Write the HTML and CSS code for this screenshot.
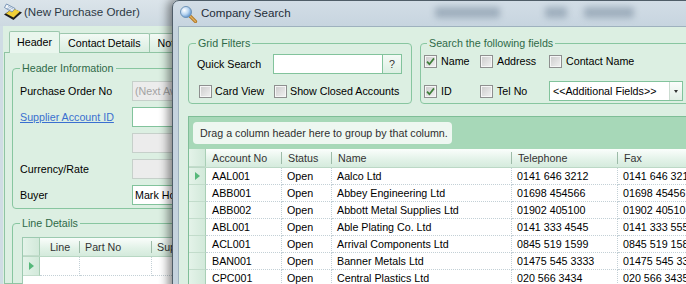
FILE: index.html
```html
<!DOCTYPE html>
<html>
<head>
<meta charset="utf-8">
<title>Company Search</title>
<link rel="stylesheet" href="styles.css">
</head>
<body>
<div class="win back">
  <div class="tbar btbar">
    <svg class="ico" width="20" height="20" viewBox="0 0 20 20">
      <path d="M1 12.5 L10.5 18 L19 10.5 L10 6.5 Z" fill="#1f1f1f"/>
      <path d="M3 11.5 L10.5 15.5 L17 9.5 L10 6.5 Z" fill="#f0cf38"/>
      <path d="M3.5 2 L12 6.5 L9 10 L1.5 5.5 Z" fill="#f4f7fb" stroke="#5d7fa6" stroke-width="0.8"/>
      <path d="M5 4.5 L10 7 M4 6 L8.5 8.3" stroke="#7d9cc0" stroke-width="0.7"/>
    </svg>
    <span class="ttl">(New Purchase Order)</span>
  </div>
  <div class="bclient">
    <div class="tabs">
      <span class="tab sel">Header</span><span class="tab">Contact Details</span><span class="tab">Notes</span>
    </div>
    <div class="tpage">
      <fieldset class="grp ghi">
        <legend>Header Information</legend>
        <div class="form">
          <span>Purchase Order No</span><span class="inp dis">(Next Available)</span>
          <a class="lnk">Supplier Account ID</a><span class="inp"></span>
          <span></span><span class="inp dis"></span>
          <span>Currency/Rate</span><span class="inp dis"></span>
          <span>Buyer</span><span class="inp">Mark Hodgson</span>
        </div>
      </fieldset>
      <fieldset class="grp gld">
        <legend>Line Details</legend>
        <div class="lgrid">
          <div class="lrow lhead"><span class="rsel"></span><span class="hc ctr">Line</span><span class="hc">Part No</span><span class="hc">Supplier</span></div>
          <div class="lrow ldata"><span class="rsel"><span class="tri"></span></span><span class="dc"></span><span class="dc"></span><span class="dc"></span></div>
        </div>
      </fieldset>
    </div>
  </div>
</div>

<div class="win front">
  <div class="tbar ftbar">
    <svg class="ico" width="20" height="20" viewBox="0 0 20 20">
      <defs>
        <radialGradient id="lens" cx="0.35" cy="0.35" r="0.75">
          <stop offset="0" stop-color="#ffffff"/>
          <stop offset="0.5" stop-color="#b9d6f2"/>
          <stop offset="1" stop-color="#4d86c4"/>
        </radialGradient>
      </defs>
      <line x1="12" y1="13" x2="17.5" y2="18.5" stroke="#b27a25" stroke-width="3.2" stroke-linecap="round"/>
      <line x1="12" y1="13" x2="17.5" y2="18.5" stroke="#e2b060" stroke-width="1.2" stroke-linecap="round"/>
      <circle cx="8" cy="9" r="5.5" fill="url(#lens)" stroke="#6f94b8" stroke-width="1"/>
    </svg>
    <span class="ttl">Company Search</span>
    <span class="blur bl1"></span><span class="blur bl2"></span><span class="blur bl3"></span>
  </div>
  <div class="fclient">
    <div class="filters">
      <fieldset class="grp gf">
        <legend>Grid Filters</legend>
        <div class="qs"><span class="qlbl">Quick Search</span><span class="inp qinp"></span><span class="qbtn">?</span></div>
        <div class="cbrow">
          <label class="chk"><span class="cb"></span>Card View</label>
          <label class="chk"><span class="cb"></span>Show Closed Accounts</label>
        </div>
      </fieldset>
      <fieldset class="grp gs">
        <legend>Search the following fields</legend>
        <div class="sgrid">
          <label class="chk"><span class="cb"><svg width="9" height="9" viewBox="0 0 9 9"><path d="M1 4.6 L3.4 7.2 L8 1.4" fill="none" stroke="#3f7f3a" stroke-width="1.7"/></svg></span>Name</label>
          <label class="chk"><span class="cb"></span>Address</label>
          <label class="chk"><span class="cb"></span>Contact Name</label>
          <label class="chk"><span class="cb"><svg width="9" height="9" viewBox="0 0 9 9"><path d="M1 4.6 L3.4 7.2 L8 1.4" fill="none" stroke="#3f7f3a" stroke-width="1.7"/></svg></span>ID</label>
          <label class="chk"><span class="cb"></span>Tel No</label>
          <div class="combo"><span class="ctext">&lt;&lt;Additional Fields&gt;&gt;</span><span class="cdrop"><span class="darr"></span></span></div>
        </div>
      </fieldset>
    </div>
    <div class="grid">
      <div class="band"><span class="drag">Drag a column header here to group by that column.</span></div>
      <div class="grow ghead"><span class="rsel"></span><span class="hc">Account No</span><span class="hc">Status</span><span class="hc">Name</span><span class="hc">Telephone</span><span class="hc">Fax</span></div>
      <div class="grow gdata"><span class="rsel"><span class="tri"></span></span><span class="dc">AAL001</span><span class="dc">Open</span><span class="dc">Aalco Ltd</span><span class="dc">0141 646 3212</span><span class="dc">0141 646 3213</span></div>
      <div class="grow gdata"><span class="rsel"></span><span class="dc">ABB001</span><span class="dc">Open</span><span class="dc">Abbey Engineering Ltd</span><span class="dc">01698 454566</span><span class="dc">01698 454567</span></div>
      <div class="grow gdata"><span class="rsel"></span><span class="dc">ABB002</span><span class="dc">Open</span><span class="dc">Abbott Metal Supplies Ltd</span><span class="dc">01902 405100</span><span class="dc">01902 405101</span></div>
      <div class="grow gdata"><span class="rsel"></span><span class="dc">ABL001</span><span class="dc">Open</span><span class="dc">Able Plating Co. Ltd</span><span class="dc">0141 333 4545</span><span class="dc">0141 333 5555</span></div>
      <div class="grow gdata"><span class="rsel"></span><span class="dc">ACL001</span><span class="dc">Open</span><span class="dc">Arrival Components Ltd</span><span class="dc">0845 519 1599</span><span class="dc">0845 519 1588</span></div>
      <div class="grow gdata"><span class="rsel"></span><span class="dc">BAN001</span><span class="dc">Open</span><span class="dc">Banner Metals Ltd</span><span class="dc">01475 545 3333</span><span class="dc">01475 545 3334</span></div>
      <div class="grow gdata"><span class="rsel"></span><span class="dc">CPC001</span><span class="dc">Open</span><span class="dc">Central Plastics Ltd</span><span class="dc">020 566 3434</span><span class="dc">020 566 3435</span></div>
    </div>
  </div>
</div>
</body>
</html>
```

FILE: styles.css
```css
* { box-sizing: border-box; }
html, body { margin: 0; padding: 0; }
body {
  width: 686px; height: 284px; overflow: hidden; position: relative;
  background: #7d8f9b;
  font-family: "Liberation Sans", Arial, sans-serif;
  font-size: 10.7px; color: #000;
}

.win { position: absolute; top: 0; overflow: hidden; }

/* title bars */
.tbar { display: flex; align-items: center; white-space: nowrap; }
.ico { flex: none; display: block; }
.ttl { font-size: 11.6px; color: #2c3944; }

/* ---------- back window ---------- */
.back {
  left: 0; width: 380px; height: 284px;
  background: #cfdce4; padding-left: 3px;
}
.btbar {
  height: 26px; padding-bottom: 3px; gap: 1px;
  background: linear-gradient(#dbe4ea, #cdd9e1);
  margin-left: -3px; padding-left: 3px;
}
.bclient { background: #dcefe2; height: 258px; }
.tabs { display: flex; align-items: flex-end; height: 26px; padding-left: 6px; }
.tab {
  height: 19px; line-height: 18px; padding: 0 8px;
  border: 1px solid #9cc7ad; border-bottom: none; border-radius: 2px 2px 0 0;
  background: linear-gradient(#f3faf5, #d9ede0);
  margin-left: -1px;
}
.tab.sel {
  height: 22px; line-height: 20px; padding: 0 7px; margin-left: 0;
  background: #e9f6ed; margin-bottom: -1px; position: relative; z-index: 1;
}
.tpage {
  margin-left: 1px; height: 232px;
  border: 1px solid #8fc4a3; border-right: none;
  padding: 9px 0 0 7px;
}

.grp {
  margin: 0; padding: 0; min-width: 0;
  border: 1px solid #88c6a0; border-radius: 4px;
}
.grp legend { padding: 0 2px; margin-left: 7px; line-height: 13px; color: #2f6a48; }

.ghi { width: 330px; }
.form {
  display: grid; grid-template-columns: 112px 200px; grid-auto-rows: 20px;
  row-gap: 6px; align-items: center; padding: 6px 0 3px 7px;
}
.inp {
  height: 20px; border: 1px solid #82c39c; background: #fff;
  padding-left: 2px; display: flex; align-items: center;
  white-space: nowrap; overflow: hidden;
}
.inp.dis { background: #ececec; border-color: #c6d0ca; color: #a3a3a3; }
.lnk { color: #3a6fd0; text-decoration: underline; }

.gld { width: 330px; margin-top: 8px; }
.lgrid {
  margin: 7px 0 0 9px; height: 60px; background: #fff;
  border-top: 1px solid #9ccab0; border-left: 1px solid #9ccab0;
}
.lrow { display: grid; grid-template-columns: 17px 40px 72px 120px; }
.lhead {
  height: 19px; background: linear-gradient(#fafdfb, #e0f1e6 60%, #d4eadc);
  border-bottom: 1px solid #b8d7c3;
}
.ldata { height: 19px; }

.hc { position: relative; padding-left: 5px; line-height: 18px; color: #333; white-space: nowrap; overflow: hidden; }
.hc::after { content: ""; position: absolute; right: 0; top: 3px; bottom: 3px; width: 1px; background: #9dbba8; }
.hc.ctr { text-align: center; padding-left: 0; }

.rsel {
  display: flex; align-items: center; justify-content: center;
  background: linear-gradient(90deg, #e4f3e9, #d2e9da);
  border-right: 1px solid #a9cfb6; border-bottom: 1px solid #c2dccb;
}
.tri {
  width: 0; height: 0;
  border-left: 5px solid #56b87a;
  border-top: 4px solid transparent; border-bottom: 4px solid transparent;
}
.dc {
  padding-left: 5px; white-space: nowrap; overflow: hidden;
  border-right: 1px dotted #c3d0d6; border-bottom: 1px dotted #c3d0d6;
}
.ldata .dc { line-height: 18px; }

/* ---------- front window ---------- */
.front {
  left: 172px; width: 530px; height: 300px;
  border: 1px solid #4f5d68; border-radius: 7px 7px 0 0;
  background: linear-gradient(#d2dde6, #c5d3de 30px);
  padding-left: 5px;
  box-shadow: -3px 0 10px 1px rgba(0, 0, 0, .45);
}
.ftbar { height: 25px; padding-bottom: 2px; gap: 3px; }
.ftbar .ttl { color: #1f2d38; }
.blur { flex: none; height: 11px; background: rgba(105, 125, 145, .45); filter: blur(3px); border-radius: 3px; }
.bl1 { width: 65px; margin-left: 141px; }
.bl2 { width: 22px; margin-left: 42px; }
.bl3 { width: 50px; margin-left: 14px; }

.fclient {
  height: 280px; background: #dcefe2;
  border-left: 1px solid #9eb1be; border-top: 1px solid #9eb1be;
  padding: 10px 0 0 9px;
}
.filters { display: flex; gap: 8px; }
.gf { width: 224px; flex: none; }
.gs { width: 300px; flex: none; }
.gs legend { margin-left: 6px; }

.qs { display: flex; align-items: center; height: 20px; margin: 4px 0 0 8px; }
.qlbl { width: 76px; flex: none; }
.qinp { width: 110px; flex: none; }
.qbtn {
  width: 19px; height: 20px; flex: none;
  border: 1px solid #82c39c; border-left: none;
  background: linear-gradient(#f4faf6, #dcefe3);
  display: flex; align-items: center; justify-content: center; color: #333;
}
.cbrow {
  display: grid; grid-template-columns: 75px auto; height: 20px;
  margin: 7px 0 2px 10px; align-items: center;
}
.chk { display: flex; align-items: center; gap: 3px; white-space: nowrap; }
.cb {
  width: 13px; height: 13px; flex: none;
  border: 1px solid #8e8f8f;
  background: linear-gradient(135deg, #cbcbcb, #f2f2f2);
  box-shadow: inset 0 0 0 1px #f6f6f6;
  display: flex; align-items: center; justify-content: center;
}
.cb svg { display: block; }

.sgrid {
  display: grid; grid-template-columns: 56px 69px 134px;
  grid-template-rows: 14px 20px; row-gap: 13px;
  margin: 4px 0 2px 3px; align-items: center;
}
.sgrid .chk { gap: 4px; }
.combo { display: flex; height: 20px; border: 1px solid #82c39c; background: #fff; }
.ctext { flex: 1; padding-left: 3px; line-height: 18px; white-space: nowrap; }
.cdrop {
  width: 13px; border-left: 1px solid #cbdcd1;
  background: linear-gradient(#fbfdfc, #e2eee6);
  display: flex; align-items: center; justify-content: center;
}
.darr { width: 0; height: 0; border-top: 3px solid #333; border-left: 2.5px solid transparent; border-right: 2.5px solid transparent; }

.grid {
  margin-top: 12px; background: #fff;
  border-top: 1px solid #7fbe97; border-left: 1px solid #7fbe97;
}
.band { height: 32px; background: #a7d8b8; padding: 5px 0 0 4px; display: flex; align-items: flex-start; }
.drag {
  height: 22px; line-height: 22px; padding: 0 4px 0 7px;
  background: #eef7f1; border-radius: 4px; color: #2f2f2f; white-space: nowrap;
}
.grow { display: grid; grid-template-columns: 17px 76px 50px 180px 106px 120px; }
.ghead {
  height: 19px; background: linear-gradient(#fbfefc, #e2f2e8 60%, #d5ebdd);
  border-bottom: 1px solid #bcd8c6;
}
.ghead .hc { padding-left: 6px; }
.gdata { height: 17px; }
.gdata .dc { line-height: 16px; }
.gdata .dc:nth-child(2) { padding-left: 6px; }
```
